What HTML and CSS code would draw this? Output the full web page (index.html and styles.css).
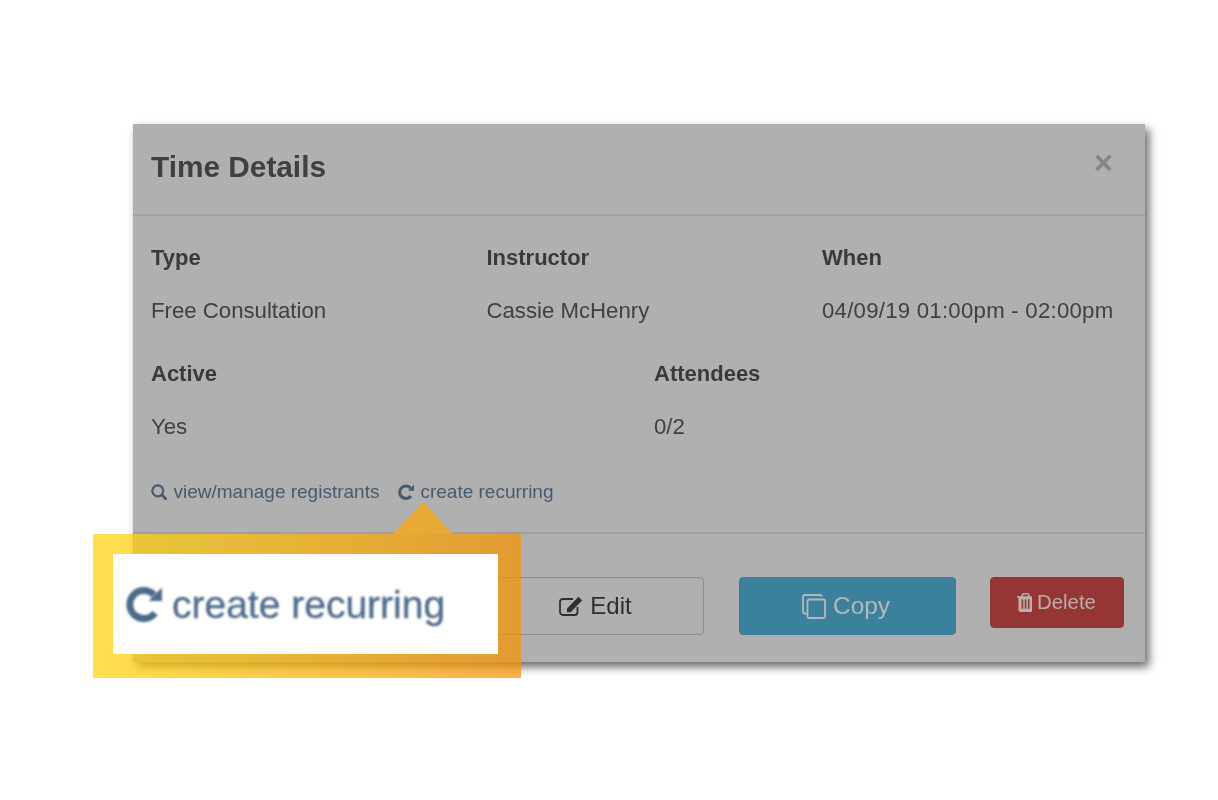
FILE: index.html
```html
<!DOCTYPE html>
<html lang="en">
<head>
<meta charset="utf-8">
<title>Time Details</title>
<link rel="stylesheet" href="styles.css">
</head>
<body>
<div class="stage">
  <section class="modal">
    <header class="modal-head">
      <h2 class="modal-title">Time Details</h2>
      <span class="close">×</span>
    </header>
    <div class="modal-body">
      <div class="row row-three">
        <div class="field"><h4 class="label">Type</h4><p class="value">Free Consultation</p></div>
        <div class="field"><h4 class="label">Instructor</h4><p class="value">Cassie McHenry</p></div>
        <div class="field"><h4 class="label">When</h4><p class="value value-when">04/09/19 01:00pm - 02:00pm</p></div>
      </div>
      <div class="row row-two">
        <div class="field"><h4 class="label">Active</h4><p class="value">Yes</p></div>
        <div class="field"><h4 class="label">Attendees</h4><p class="value">0/2</p></div>
      </div>
      <div class="links">
        <a class="link">
          <svg class="link-icon" viewBox="0 0 16 16"><circle cx="6.800" cy="6.800" r="5.500" fill="none" stroke="currentColor" stroke-width="2.200"/><path d="M10.800 10.800l3.900 3.900" stroke="currentColor" stroke-width="2.800" stroke-linecap="round"/></svg>
          view/manage registrants
        </a>
        <a class="link">
          <svg class="link-icon" viewBox="0 0 36 36"><path d="M28 9A14 14 0 1 0 29 27" fill="none" stroke="currentColor" stroke-width="7"/><path d="M36 1.500V15H22.500z" fill="currentColor"/></svg>
          create recurring
        </a>
      </div>
    </div>
    <footer class="modal-foot">
      <button class="btn btn-edit">
        <svg class="btn-icon" viewBox="0 0 24 20"><path d="M18.500 11v5a3 3 0 0 1-3 3H4a3 3 0 0 1-3-3V6a3 3 0 0 1 3-3h10" fill="none" stroke="currentColor" stroke-width="1.800"/><path d="M8 12.500L19.500.8l3.700 3.700L11.500 16.200H8z" fill="currentColor"/></svg>
        Edit
      </button>
      <button class="btn btn-copy">
        <svg class="btn-icon-copy" viewBox="0 0 24 25"><path d="M19.500 3V2.500a1.500 1.500 0 0 0-1.500-1.500H2.500A1.500 1.500 0 0 0 1 2.500V18a1.500 1.500 0 0 0 1.500 1.500H5" fill="none" stroke="currentColor" stroke-width="1.800"/><rect x="5.500" y="5.500" width="17.500" height="18.500" rx="1.500" fill="none" stroke="currentColor" stroke-width="1.800"/></svg>
        Copy
      </button>
      <button class="btn btn-delete">
        <svg class="btn-icon-trash" viewBox="128 128 1280 1536"><path fill="currentColor" d="M704 1376v-704q0-14-9-23t-23-9h-64q-14 0-23 9t-9 23v704q0 14 9 23t23 9h64q14 0 23-9t9-23zm256 0v-704q0-14-9-23t-23-9h-64q-14 0-23 9t-9 23v704q0 14 9 23t23 9h64q14 0 23-9t9-23zm256 0v-704q0-14-9-23t-23-9h-64q-14 0-23 9t-9 23v704q0 14 9 23t23 9h64q14 0 23-9t9-23zm-544-992h448l-48-117q-7-9-17-11h-317q-10 2-17 11zm928 32v64q0 14-9 23t-23 9h-96v948q0 83-47 143.500t-113 60.500h-832q-66 0-113-58.500t-47-141.500v-952h-96q-14 0-23-9t-9-23v-64q0-14 9-23t23-9h309l70-167q15-37 54-63t79-26h320q40 0 79 26t54 63l70 167h309q14 0 23 9t9 23z"/></svg>
        Delete
      </button>
    </footer>
    <div class="callout">
      <span class="callout-arrow"></span>
      <div class="callout-inner">
        <svg class="callout-icon" viewBox="0 0 36 36"><path d="M28 9A14 14 0 1 0 29 27" fill="none" stroke="currentColor" stroke-width="7"/><path d="M36 1.500V15H22.500z" fill="currentColor"/></svg>
        <span class="callout-text">create recurring</span>
      </div>
    </div>
  </section>
</div>
</body>
</html>
```
FILE: styles.css
```css
* { box-sizing: border-box; }

html, body {
  margin: 0;
  background: #fff;
}

body {
  font-family: "Liberation Sans", Arial, sans-serif;
  height: 800px;
  overflow: hidden;
}

.stage {
  padding: 124px 0 0 133px;
}

.modal {
  position: relative;
  width: 1012px;
  height: 538px;
  background: #b0b0b0;
  color: #3d3d3d;
  box-shadow: 4px 5px 9px rgba(0, 0, 0, 0.6);
  display: flex;
  flex-direction: column;
}

.modal-head {
  height: 92px;
  padding: 0 18px;
  border-bottom: 2px solid #a0a0a0;
  display: flex;
  justify-content: space-between;
  align-items: flex-start;
}

.modal-title {
  margin: 26px 0 0;
  font-size: 29.8px;
  line-height: 34px;
  font-weight: bold;
  color: #404040;
  filter: blur(0.5px);
}

.close {
  margin: 17px 0 0;
  padding-right: 14px;
  font-size: 33px;
  line-height: 44px;
  font-weight: bold;
  color: #868686;
  filter: blur(0.5px);
}

.modal-body {
  height: 318px;
  padding: 0 18px;
  border-bottom: 2px solid #a0a0a0;
}

.row {
  display: grid;
  filter: blur(0.5px);
}

.row-three {
  grid-template-columns: repeat(3, 335.5px);
  margin-top: 29px;
}

.row-two {
  grid-template-columns: repeat(2, 503px);
  margin-top: 37px;
}

.label {
  margin: 0;
  font-size: 22px;
  line-height: 26px;
  font-weight: bold;
  color: #3a3a3a;
}

.value {
  margin: 27px 0 0;
  font-size: 22.2px;
  line-height: 26px;
  color: #404040;
}

.value-when {
  letter-spacing: 0.25px;
}

.links {
  display: flex;
  gap: 18.5px;
  margin-top: 40px;
  filter: blur(0.5px);
}

.link {
  display: flex;
  align-items: center;
  gap: 6.5px;
  font-size: 19px;
  line-height: 24px;
  color: #465a70;
  white-space: nowrap;
}

.link-icon {
  width: 16px;
  height: 16px;
}

.modal-foot {
  flex: 1;
  padding: 43px 21px 0 0;
  display: flex;
  justify-content: flex-end;
  align-items: flex-start;
  gap: 34px;
}

.btn {
  display: flex;
  align-items: center;
  justify-content: center;
  border-radius: 4px;
  font-family: inherit;
  padding: 0;
  filter: blur(0.5px);
}

.btn-edit {
  width: 217px;
  height: 58px;
  margin-right: 1px;
  gap: 7px;
  background: transparent;
  border: 1.5px solid #8b8b8b;
  color: #2f2f2f;
  font-size: 24px;
}

.btn-icon {
  width: 24px;
  height: 20px;
}

.btn-copy {
  width: 217px;
  height: 58px;
  gap: 7px;
  padding-right: 3px;
  background: #3c819b;
  border: 1px solid #3a7c96;
  color: #b4b8ba;
  font-size: 24.4px;
}

.btn-icon-copy {
  width: 24px;
  height: 25px;
}

.btn-delete {
  width: 134px;
  height: 51px;
  gap: 5px;
  padding-right: 2px;
  background: #963634;
  border: 1px solid #8f3432;
  color: #b8b0ae;
  font-size: 20.4px;
}

.btn-icon-trash {
  width: 16px;
  height: 19px;
}

.callout {
  position: absolute;
  left: -40px;
  top: 410px;
  width: 428px;
  height: 144px;
  padding: 20px 23px 24px 20px;
  background: linear-gradient(90deg, rgba(255, 212, 12, 0.72), rgba(247, 146, 3, 0.72));
}

.callout-arrow {
  position: absolute;
  left: 300px;
  top: -32px;
  width: 60px;
  height: 32px;
  background: #e8a935;
  clip-path: polygon(50% 0, 100% 100%, 0 100%);
}

.callout-inner {
  height: 100%;
  background: #fff;
  display: flex;
  align-items: center;
  gap: 10px;
  padding: 2px 0 0 13px;
  color: #4f6b8c;
}

.callout-icon {
  width: 36px;
  height: 36px;
  margin-top: -3px;
  filter: blur(0.9px);
}

.callout-text {
  font-size: 39px;
  line-height: 48px;
  white-space: nowrap;
  -webkit-text-stroke: 0.4px currentColor;
  filter: blur(0.9px);
}
```
